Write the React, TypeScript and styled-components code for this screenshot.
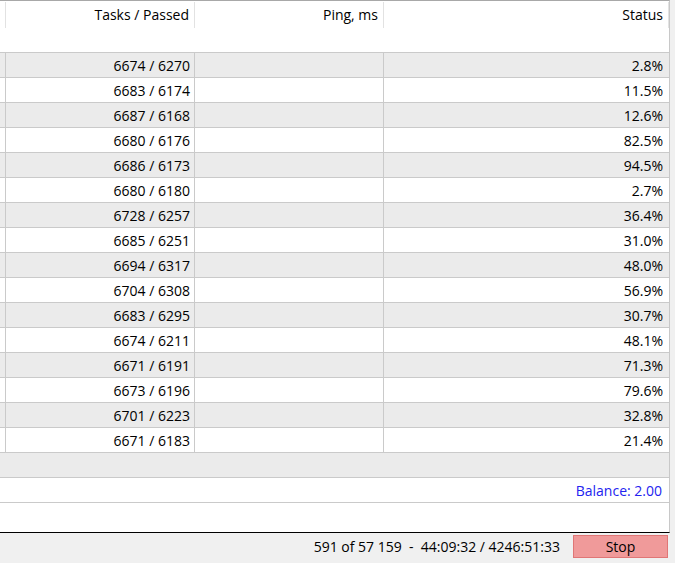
import React from "react";
import styled, { createGlobalStyle } from "styled-components";

const Global = createGlobalStyle`
  html, body { margin: 0; padding: 0; background: #f0f0f0; }
  body { font-family: "Open Sans", "Noto Sans", sans-serif; font-size: 14px; color: #000; }
  #root { width: 675px; height: 563px; overflow: hidden; }
`;

const Window = styled.div`
  display: flex;
  flex-direction: column;
  width: 675px;
  height: 563px;
  background: #f0f0f0;
`;

const Panel = styled.div`
  width: 670px;
  height: 533px;
  background: #fff;
  border-top: 1px solid #a8a8a8;
  border-right: 1px solid #c8c8c8;
  border-bottom: 1px solid #000;
  display: flex;
  flex-direction: column;
  box-sizing: border-box;
`;

const Header = styled.div`
  display: flex;
  padding-top: 1px;
  height: 27px;
  box-sizing: border-box;
`;

const HeadCell = styled.div<{ $w: number }>`
  width: ${(p) => p.$w}px;
  height: 26px;
  line-height: 26px;
  box-sizing: border-box;
  text-align: right;
  padding-right: 5px;
  border-right: 1px solid #e2e2e2;
  white-space: nowrap;
  overflow: hidden;
`;

const Spacer = styled.div`
  height: 24px;
`;

const Row = styled.div<{ $alt: boolean }>`
  display: flex;
  height: 25px;
  box-sizing: border-box;
  border-top: 1px solid #cacaca;
  background: ${(p) => (p.$alt ? "#ebebeb" : "#fff")};
`;

const Cell = styled.div<{ $w: number; $last?: boolean }>`
  width: ${(p) => p.$w}px;
  height: 24px;
  line-height: 23px;
  padding-top: 1px;
  box-sizing: border-box;
  text-align: right;
  padding-right: ${(p) => (p.$last ? 6 : 4)}px;
  border-right: ${(p) => (p.$last ? "none" : "1px solid #cacaca")};
  white-space: nowrap;
`;

const FullRow = styled.div<{ $alt: boolean }>`
  height: 25px;
  line-height: 23px;
  padding-top: 1px;
  box-sizing: border-box;
  border-top: 1px solid #cacaca;
  background: ${(p) => (p.$alt ? "#ebebeb" : "#fff")};
  text-align: right;
  padding-right: 7px;
`;

const Balance = styled.span`
  color: #2323f0;
`;

const Filler = styled.div`
  flex: 1;
  border-top: 1px solid #cacaca;
`;

const StatusBar = styled.div`
  display: flex;
  justify-content: flex-end;
  align-items: flex-start;
  gap: 13px;
  height: 30px;
  padding: 2px 7px 0 0;
  box-sizing: border-box;
`;

const StatusText = styled.span`
  white-space: pre;
  line-height: 23px;
`;

const StopButton = styled.button`
  width: 95px;
  height: 23px;
  box-sizing: border-box;
  background: #f09a9a;
  border: 1px solid #e07676;
  font-family: "Open Sans", "Noto Sans", sans-serif;
  font-size: 14px;
  color: #000;
  padding: 0;
  line-height: 21px;
`;

const rows: [string, string][] = [
  ["6674 / 6270", "2.8%"],
  ["6683 / 6174", "11.5%"],
  ["6687 / 6168", "12.6%"],
  ["6680 / 6176", "82.5%"],
  ["6686 / 6173", "94.5%"],
  ["6680 / 6180", "2.7%"],
  ["6728 / 6257", "36.4%"],
  ["6685 / 6251", "31.0%"],
  ["6694 / 6317", "48.0%"],
  ["6704 / 6308", "56.9%"],
  ["6683 / 6295", "30.7%"],
  ["6674 / 6211", "48.1%"],
  ["6671 / 6191", "71.3%"],
  ["6673 / 6196", "79.6%"],
  ["6701 / 6223", "32.8%"],
  ["6671 / 6183", "21.4%"],
];

export default function App() {
  return (
    <Window>
      <Global />
      <Panel>
        <Header>
          <HeadCell $w={6} />
          <HeadCell $w={189}>Tasks / Passed</HeadCell>
          <HeadCell $w={189}>Ping, ms</HeadCell>
          <HeadCell $w={285}>Status</HeadCell>
        </Header>
        <Spacer />
        {rows.map(([tasks, status], i) => (
          <Row key={i} $alt={i % 2 === 0}>
            <Cell $w={6} />
            <Cell $w={189}>{tasks}</Cell>
            <Cell $w={189} />
            <Cell $w={285} $last>
              {status}
            </Cell>
          </Row>
        ))}
        <FullRow $alt />
        <FullRow $alt={false}>
          <Balance>Balance: 2.00</Balance>
        </FullRow>
        <Filler />
      </Panel>
      <StatusBar>
        <StatusText>591 of 57 159  -  44:09:32 / 4246:51:33</StatusText>
        <StopButton>Stop</StopButton>
      </StatusBar>
    </Window>
  );
}
